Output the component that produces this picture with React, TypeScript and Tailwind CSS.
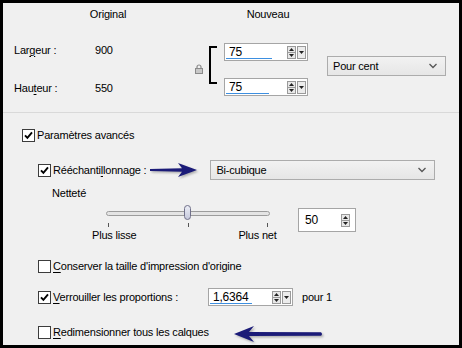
import React from "react";

const FONT = { fontFamily: '"Liberation Sans", Arial, sans-serif' };

function U({ children }: { children: React.ReactNode }) {
  return <span className="underline underline-offset-[2px] decoration-1">{children}</span>;
}

function Check({ checked }: { checked?: boolean }) {
  return (
    <div className="w-[13px] h-[13px] border border-[#3c3c3c] bg-white flex items-center justify-center shrink-0">
      {checked && (
        <svg width="9" height="9" viewBox="0 0 9 9">
          <path d="M1 4.3 L3.4 6.8 L8 1.4" stroke="#000" strokeWidth="1.9" fill="none" />
        </svg>
      )}
    </div>
  );
}

function SpinBtns({ dropdown = true }: { dropdown?: boolean }) {
  return (
    <div className="flex items-center gap-[1px] pr-[1px]">
      <div className="w-[9px] h-[13px] flex flex-col border border-[#9a9a9a] bg-[#e8e8e8]">
        <div className="flex-1 flex items-center justify-center border-b border-[#9a9a9a]">
          <svg width="5" height="3" viewBox="0 0 5 3"><path d="M0 3 L2.5 0 L5 3 Z" fill="#222" /></svg>
        </div>
        <div className="flex-1 flex items-center justify-center">
          <svg width="5" height="3" viewBox="0 0 5 3"><path d="M0 0 L2.5 3 L5 0 Z" fill="#222" /></svg>
        </div>
      </div>
      {dropdown && (
        <div className="w-[9px] h-[13px] flex items-center justify-center border border-[#9a9a9a] bg-[#ececec]">
          <svg width="5" height="3" viewBox="0 0 5 3"><path d="M0 0 L2.5 3 L5 0 Z" fill="#222" /></svg>
        </div>
      )}
    </div>
  );
}

function SpinInput({ value, bar, width }: { value: string; bar: number; width: number }) {
  return (
    <div className="h-[18px] border border-[#a5a5a5] bg-white flex items-center shrink-0" style={{ width }}>
      <div className="flex-1 h-full flex flex-col pl-[1px]">
        <div className="flex-1 pl-[3px] pt-[2px] leading-[12px] text-[12px] text-black">{value}</div>
        <div className="h-[2px] bg-[#3d8fe0] mb-[1px]" style={{ width: bar }} />
      </div>
      <SpinBtns />
    </div>
  );
}

function Select({ label, width }: { label: string; width: number }) {
  return (
    <div
      className="h-[20px] border border-[#acacac] bg-gradient-to-b from-[#f2f2f2] to-[#e6e6e6] flex items-center justify-between pl-[5px] pr-[8px] text-[11px] tracking-[-0.2px] text-black"
      style={{ width }}
    >
      <span>{label}</span>
      <svg width="8" height="6" viewBox="0 0 8 6">
        <path d="M0.5 1 L4 4.5 L7.5 1" stroke="#555" strokeWidth="1.3" fill="none" />
      </svg>
    </div>
  );
}

function ArrowRight() {
  return (
    <svg width="54" height="20" viewBox="0 0 54 20" className="shrink-0">
      <defs>
        <filter id="sh1" x="-20%" y="-50%" width="140%" height="200%">
          <feGaussianBlur stdDeviation="1.2" />
        </filter>
      </defs>
      <path d="M1 9 L33 8.2 L29 3 L48 10 L29 17 L33 11.8 L1 11 Z" fill="#777" opacity="0.55" filter="url(#sh1)" transform="translate(1.5,1.5)" />
      <path d="M1 9 L33 8.2 L29 3 L48 10 L29 17 L33 11.8 L1 11 Z" fill="#1b1b78" />
    </svg>
  );
}

function ArrowLeft() {
  return (
    <svg width="94" height="22" viewBox="0 0 94 22" className="shrink-0">
      <defs>
        <filter id="sh2" x="-20%" y="-50%" width="140%" height="200%">
          <feGaussianBlur stdDeviation="1.2" />
        </filter>
      </defs>
      <path d="M1 11 L21 3 L16 9 L88 9.2 Q90 11 88 12.8 L16 13 L21 19 Z" fill="#777" opacity="0.55" filter="url(#sh2)" transform="translate(1.5,1.5)" />
      <path d="M1 11 L21 3 L16 9 L88 9.2 Q90 11 88 12.8 L16 13 L21 19 Z" fill="#1b1b78" />
    </svg>
  );
}

function Lock() {
  return (
    <svg width="8" height="10" viewBox="0 0 8 10">
      <path d="M2 4.5 V3 a2 2 0 0 1 4 0 V4.5" stroke="#8a8a8a" strokeWidth="1.2" fill="none" />
      <rect x="0.5" y="4.5" width="7" height="5" fill="#c8c8c8" stroke="#8a8a8a" strokeWidth="1" />
    </svg>
  );
}

export default function App() {
  return (
    <div
      className="w-[462px] h-[348px] border-[3px] border-black bg-[#f0f0f0] text-[11px] tracking-[-0.2px] text-black overflow-hidden whitespace-nowrap"
      style={FONT}
    >
      {/* Top section */}
      <div className="h-[110px] border-b border-[#d9d9d9] flex flex-col">
        <div className="h-[22px] flex items-center">
          <div className="w-[210px] text-center">Original</div>
          <div className="w-[110px] text-center">Nouveau</div>
        </div>
        <div className="flex items-start mt-[18px]">
          <div className="w-[192px] flex flex-col">
            <div className="h-[14px] flex items-center pl-[11px]">
              <span className="w-[81px]">Lar<U>g</U>eur :</span>
              <span>900</span>
            </div>
            <div className="h-[24px]" />
            <div className="h-[14px] flex items-center pl-[11px]">
              <span className="w-[81px]">Hau<U>t</U>eur :</span>
              <span>550</span>
            </div>
          </div>
          <div className="h-[52px] flex items-center">
            <Lock />
          </div>
          <div className="ml-[6px] mt-[3px] w-[8px] h-[38px] border-l-2 border-t-2 border-b-2 border-black" />
          <div className="ml-[7px] flex flex-col gap-[17px]">
            <SpinInput value="75" bar={46} width={84} />
            <SpinInput value="75" bar={43} width={84} />
          </div>
          <div className="ml-[19px] mt-[13px]">
            <Select label="Pour cent" width={119} />
          </div>
        </div>
      </div>

      {/* Bottom section */}
      <div className="flex flex-col pt-[12px]">
        <div className="h-[21px] flex items-center pl-[19px] gap-[2px]">
          <Check checked />
          <span>Paramètres avancés</span>
        </div>
        <div className="h-[22px] mt-[13px] flex items-center pl-[35px]">
          <Check checked />
          <span className="ml-[2px]">Rééchanti<U>l</U>lonnage :</span>
          <div className="ml-[3px]">
            <ArrowRight />
          </div>
          <div className="ml-[7px]">
            <Select label="Bi-cubique" width={225} />
          </div>
        </div>
        <div className="h-[14px] mt-[5px] flex items-center pl-[49px]">Netteté</div>
        <div className="flex items-start mt-[5px]">
          <div className="flex flex-col w-[270px] shrink-0">
            <div className="relative ml-[103px] w-[164px] h-[18px]">
              <div className="absolute left-0 right-0 top-[6px] h-[5px] rounded-full border border-[#9c9c9c] bg-[#e4e4e4]" />
              <div className="absolute left-[78px] top-0 w-[7px] h-[15px] rounded-full border border-[#70708a] bg-gradient-to-b from-[#eceef6] to-[#c6c9dc]" />
            </div>
            <div className="ml-[103px] w-[164px] h-[5px] flex justify-between px-[2px]">
              <div className="w-[1px] h-[4px] bg-[#555]" />
              <div className="w-[1px] h-[4px] bg-[#555]" />
              <div className="w-[1px] h-[4px] bg-[#555]" />
            </div>
            <div className="h-[14px] flex items-center">
              <span className="ml-[89px] shrink-0">Plus lisse</span>
              <span className="ml-[102px] shrink-0">Plus net</span>
            </div>
          </div>
          <div className="ml-[25px] mt-[3px] w-[58px] h-[24px] border border-[#a5a5a5] bg-white flex items-center justify-between pl-[6px]">
            <span className="text-[12px]">50</span>
            <div className="pr-[4px]">
              <SpinBtns dropdown={false} />
            </div>
          </div>
        </div>
        <div className="h-[14px] mt-[17px] flex items-center pl-[35px] gap-[2px]">
          <Check />
          <span><U>C</U>onserver la taille d&apos;impression d&apos;origine</span>
        </div>
        <div className="h-[20px] mt-[14px] flex items-center pl-[35px]">
          <Check checked />
          <span className="ml-[2px] w-[155px] shrink-0"><U>V</U>errouiller les proportions :</span>
          <SpinInput value="1,6364" bar={42} width={85} />
          <span className="ml-[9px]">pour 1</span>
        </div>
        <div className="h-[22px] mt-[14px] flex items-center pl-[35px]">
          <Check />
          <span className="ml-[2px]"><U>R</U>edimensionner tous les calques</span>
          <div className="ml-[24px] mt-[4px]">
            <ArrowLeft />
          </div>
        </div>
      </div>
    </div>
  );
}
